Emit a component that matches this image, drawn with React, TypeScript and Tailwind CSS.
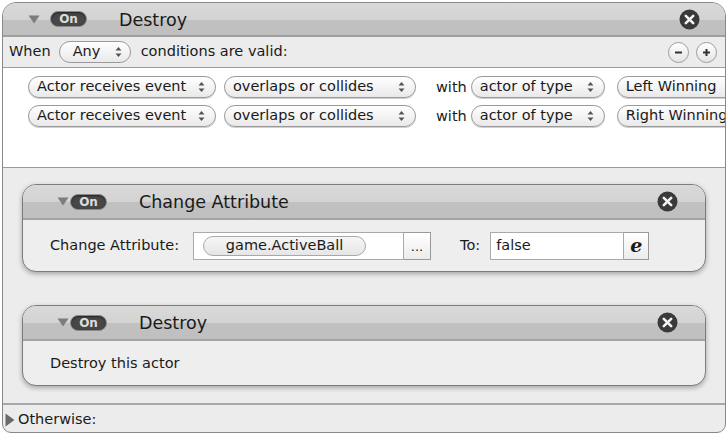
import React from 'react';

const font = { fontFamily: '"DejaVu Sans", "Liberation Sans", sans-serif' };

const Updown: React.FC = () => (
  <svg width="7" height="12" viewBox="0 0 7 12" className="shrink-0">
    <path d="M3.5 1 L6.5 4.5 H0.5 Z" fill="#555" />
    <path d="M3.5 11 L6.5 7.5 H0.5 Z" fill="#555" />
  </svg>
);

const Pill: React.FC<{ label: string; width: string; cut?: boolean }> = ({ label, width, cut }) => (
  <div
    className={`${width} h-[22px] shrink-0 flex items-center justify-between pl-[8px] pr-[10px] rounded-full border border-[#9a9a9a] bg-[linear-gradient(#ffffff,#e9e9e9)] shadow-[0_1px_0_#d0d0d0] text-[14.5px] text-[#1a1a1a] whitespace-nowrap overflow-hidden`}
  >
    <span>{label}</span>
    {!cut && <Updown />}
  </div>
);

const Disclosure: React.FC<{ open?: boolean }> = ({ open = true }) =>
  open ? (
    <svg width="12" height="9" viewBox="0 0 12 9" className="shrink-0">
      <path d="M0.5 0.5 H11.5 L6 8.5 Z" fill="#7d7d7d" />
    </svg>
  ) : (
    <svg width="10" height="14" viewBox="0 0 10 14" className="shrink-0">
      <path d="M0.5 0.5 V13.5 L9.5 7 Z" fill="#6a6a6a" />
    </svg>
  );

const OnBadge: React.FC = () => (
  <div className="w-[37px] h-[16px] rounded-full bg-[#474747] border border-[#8a8a8a] flex items-center justify-center text-[12px] leading-none text-[#dcdcdc] font-bold shadow-[inset_0_1px_2px_#222]">
    On
  </div>
);

const CloseIcon: React.FC = () => (
  <svg width="21" height="21" viewBox="0 0 21 21">
    <circle cx="10.5" cy="10.5" r="10" fill="#3a3a3a" />
    <path d="M6.8 6.8 L14.2 14.2 M14.2 6.8 L6.8 14.2" stroke="#f2f2f2" strokeWidth="2.6" strokeLinecap="round" />
  </svg>
);

const RoundButton: React.FC<{ plus?: boolean }> = ({ plus }) => (
  <div className="w-[21px] h-[21px] rounded-full border border-[#9c9c9c] bg-[linear-gradient(#ffffff,#e4e4e4)] flex items-center justify-center">
    <svg width="11" height="11" viewBox="0 0 11 11">
      <path d="M2 5.5 H9" stroke="#333" strokeWidth="2" />
      {plus && <path d="M5.5 2 V9" stroke="#333" strokeWidth="2" />}
    </svg>
  </div>
);

const Gloss = 'bg-[linear-gradient(#d9d9d9_0%,#d3d3d3_52%,#c1c1c1_52%,#bfbfbf_100%)]';

const ActionCard: React.FC<{ title: string; height: string; children: React.ReactNode }> = ({ title, height, children }) => (
  <div className={`${height} rounded-[14px] border border-[#7c7c7c] bg-[#eeeeee] overflow-hidden shadow-[0_2px_5px_rgba(0,0,0,0.3)] flex flex-col`}>
    <div className={`h-[35px] shrink-0 ${Gloss} border-b-2 border-[#a3a3a3] flex items-center pl-[34px] pr-[27px]`}>
      <Disclosure />
      <div className="ml-[1px]">
        <OnBadge />
      </div>
      <span className="ml-[32px] pt-[2px] text-[17.5px] text-[#1a1a1a]">{title}</span>
      <div className="ml-auto">
        <CloseIcon />
      </div>
    </div>
    {children}
  </div>
);

const ConditionRow: React.FC<{ target: string }> = ({ target }) => (
  <div className="h-[24px] flex items-center">
    <Pill label="Actor receives event" width="w-[188px]" />
    <div className="ml-[8px]">
      <Pill label="overlaps or collides" width="w-[192px]" />
    </div>
    <span className="ml-[20px] mr-[4px] pt-[2px] text-[14.5px] text-[#1a1a1a]">with</span>
    <Pill label="actor of type" width="w-[134px]" />
    <div className="ml-[12px]">
      <Pill label={target} width="w-[130px]" cut />
    </div>
  </div>
);

export default function App() {
  return (
    <div className="w-[728px] h-[435px] bg-white pt-[2px] pl-[2px]" style={font}>
      <div className="w-[724px] h-[431px] border border-[#888] rounded-t-[14px] rounded-b-[9px] bg-[#ececec] overflow-hidden flex flex-col">
        {/* Rule header */}
        <div className={`h-[34px] shrink-0 ${Gloss} border-b-2 border-[#a0a0a0] flex items-center pl-[25px] pr-[25px]`}>
          <Disclosure />
          <div className="ml-[10px]">
            <OnBadge />
          </div>
          <span className="ml-[32px] pt-[3px] text-[17.5px] text-[#1a1a1a]">Destroy</span>
          <div className="ml-auto">
            <CloseIcon />
          </div>
        </div>

        {/* When row */}
        <div className="h-[31px] shrink-0 flex items-center pl-[6px] pr-[8px] border-b border-[#9a9a9a] text-[14.5px] text-[#1a1a1a]">
          <span>When</span>
          <div className="ml-[8px] w-[72px] h-[22px] flex items-center justify-between pl-[13px] pr-[8px] rounded-full border border-[#9a9a9a] bg-[linear-gradient(#ffffff,#e9e9e9)]">
            <span>Any</span>
            <Updown />
          </div>
          <span className="ml-[10px]">conditions are valid:</span>
          <div className="ml-auto flex gap-[7px]">
            <RoundButton />
            <RoundButton plus />
          </div>
        </div>

        {/* Conditions */}
        <div className="h-[100px] shrink-0 bg-white border-b border-[#9a9a9a] pl-[25px] pt-[7px] flex flex-col gap-[5px]">
          <ConditionRow target="Left Winning" />
          <ConditionRow target="Right Winning" />
        </div>

        {/* Actions */}
        <div className="flex-1 px-[19px] pt-[16px] flex flex-col gap-[33px]">
          <ActionCard title="Change Attribute" height="h-[88px]">
            <div className="flex-1 flex items-center pl-[27px] text-[14.5px] text-[#1a1a1a]">
              <span>Change Attribute:</span>
              <div className="ml-[14px] flex h-[28px]">
                <div className="w-[211px] h-full bg-white border border-[#aaa] flex items-center pl-[9px]">
                  <div className="w-[163px] h-[20px] rounded-full border border-[#a8a8a8] bg-[linear-gradient(#f6f6f6,#e6e6e6)] flex items-center justify-center">
                    game.ActiveBall
                  </div>
                </div>
                <div className="w-[27px] h-full bg-[linear-gradient(#ffffff,#ececec)] border border-l-0 border-[#999] flex items-end justify-center pb-[6px] text-[13px] leading-none">
                  ...
                </div>
              </div>
              <span className="ml-[29px]">To:</span>
              <div className="ml-[10px] flex h-[28px]">
                <div className="w-[134px] h-full bg-white border border-[#aaa] flex items-center pl-[5px]">false</div>
                <div className="w-[25px] h-full bg-[linear-gradient(#ffffff,#ececec)] border border-l-0 border-[#999] flex items-center justify-center text-[19px] font-bold italic leading-none" style={{ fontFamily: '"DejaVu Serif", serif' }}>
                  e
                </div>
              </div>
            </div>
          </ActionCard>

          <ActionCard title="Destroy" height="h-[81px]">
            <div className="flex-1 flex items-center pl-[27px] pt-[2px] text-[14.5px] text-[#1a1a1a]">Destroy this actor</div>
          </ActionCard>
        </div>

        {/* Otherwise */}
        <div className="h-[29px] shrink-0 border-t-2 border-[#a8a8a8] flex items-center pl-[2px] pt-[2px] text-[14.5px] text-[#1a1a1a]">
          <Disclosure open={false} />
          <span className="ml-[3px]">Otherwise:</span>
        </div>
      </div>
    </div>
  );
}
